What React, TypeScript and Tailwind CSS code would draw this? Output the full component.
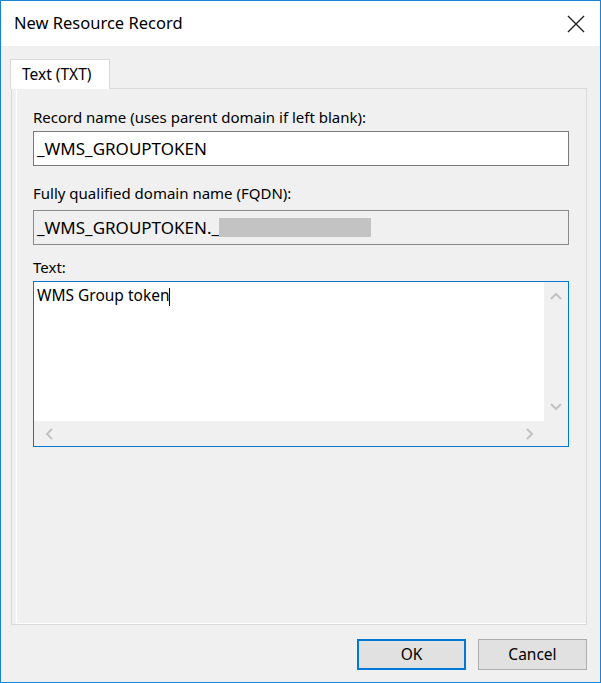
import React from "react";

const font = { fontFamily: '"Noto Sans", "Open Sans", sans-serif' };

const Chevron: React.FC<{ dir: "up" | "down" | "left" | "right" }> = ({ dir }) => {
  const pts: Record<string, string> = {
    up: "1,7 6,2 11,7",
    down: "1,2 6,7 11,2",
    left: "7,1 2,6 7,11",
    right: "2,1 7,6 2,11",
  };
  const vertical = dir === "up" || dir === "down";
  return (
    <svg
      width={vertical ? 12 : 9}
      height={vertical ? 9 : 12}
      viewBox={vertical ? "0 0 12 9" : "0 0 9 12"}
      className="block"
    >
      <polyline points={pts[dir]} fill="none" stroke="#c2c2c2" strokeWidth="2" />
    </svg>
  );
};

const App: React.FC = () => {
  return (
    <div
      className="w-[601px] h-[683px] border border-[#1883d7] bg-[#f0f0f0] flex flex-col text-black"
      style={font}
    >
      {/* title bar */}
      <div className="h-[45px] bg-white flex items-center justify-between pl-[13px] pr-[15px] shrink-0">
        <span className="text-[16.5px] leading-none">New Resource Record</span>
        <svg width="18" height="18" viewBox="0 0 18 18">
          <path d="M1 1 L17 17 M17 1 L1 17" stroke="#222" strokeWidth="1.4" fill="none" />
        </svg>
      </div>

      <div className="flex-1 flex flex-col pl-[9px] pr-[13px] pt-[13px]">
        {/* tab */}
        <div className="w-[100px] h-[30px] bg-white border border-b-0 border-[#d9d9d9] flex items-center pl-[11px] text-[15.5px] relative z-10 -mb-px">
          Text (TXT)
        </div>
        {/* panel */}
        <div className="ml-px border border-[#d9d9d9] h-[537px] pl-[4px] pt-[1px]">
          <div className="h-full border-l border-b border-white flex flex-col pl-[16px] pr-[17px] pt-[18px]">
            <label className="text-[15px] leading-[18px]">
              Record name (uses parent domain if left blank):
            </label>
            <div className="mt-[5px] h-[35px] bg-white border border-[#7a7a7a] flex items-center pl-[3px] text-[17px]">
              _WMS_GROUPTOKEN
            </div>

            <label className="mt-[18px] text-[15px] leading-[18px]">
              Fully qualified domain name (FQDN):
            </label>
            <div className="mt-[8px] h-[35px] bg-[#f0f0f0] border border-[#8a8a8a] flex items-center pl-[3px] text-[17px]">
              <span>_WMS_GROUPTOKEN._</span>
              <span className="w-[152px] h-[19px] bg-[#c3c3c3]" />
            </div>

            <label className="mt-[13px] text-[15px] leading-[18px]">Text:</label>
            <div className="mt-[5px] h-[166px] border border-[#0078d7] bg-white flex flex-col">
              <div className="flex-1 flex">
                <div className="flex-1 pl-[3px] pt-[3px] text-[15.5px] leading-[20px]">
                  WMS Group token<span className="inline-block w-px h-[18px] bg-black align-middle" />
                </div>
                <div className="w-[24px] bg-[#f0f0f0] flex flex-col items-center justify-between py-[10px]">
                  <Chevron dir="up" />
                  <Chevron dir="down" />
                </div>
              </div>
              <div className="h-[25px] bg-[#f0f0f0] flex items-center justify-between pl-[11px] pr-[34px]">
                <Chevron dir="left" />
                <Chevron dir="right" />
              </div>
            </div>
          </div>
        </div>

        {/* buttons */}
        <div className="flex justify-end gap-[12px] mt-[14px]">
          <button className="w-[109px] h-[31px] bg-[#e1e1e1] border-2 border-[#0078d7] text-[15.5px] flex items-center justify-center">
            OK
          </button>
          <button className="w-[109px] h-[31px] bg-[#e1e1e1] border border-[#adadad] text-[15.5px] flex items-center justify-center">
            Cancel
          </button>
        </div>
      </div>
    </div>
  );
};

export default App;
